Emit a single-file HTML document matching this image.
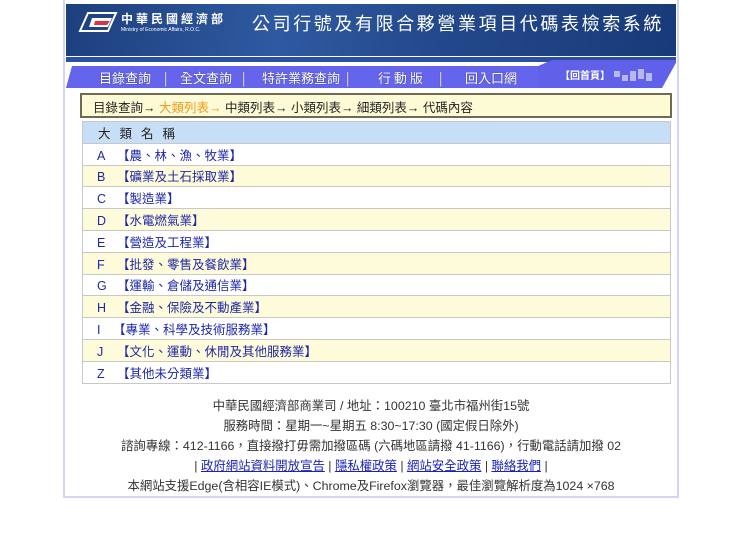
<!DOCTYPE html>
<html><head><meta charset="utf-8">
<style>
*{margin:0;padding:0;box-sizing:border-box}
body{width:740px;height:542px;background:#fff;font-family:"Liberation Sans","Noto Sans CJK TC",sans-serif;position:relative;overflow:hidden}
.outer{position:absolute;left:63px;top:0;width:616px;height:498px;border:2px solid #d4d4f4;border-top:none}
.hdr{position:absolute;left:66px;top:4px;width:610px;height:52px;background:linear-gradient(100deg,#1d3f7e 0%,#2f5aa0 35%,#24498c 60%,#183a78 100%)}
.hdr .t{position:absolute;left:186px;top:6px;color:#fff;font-size:18px;letter-spacing:2.6px;white-space:nowrap;font-family:"Noto Sans CJK TC",sans-serif}
.hdr .m{position:absolute;left:55px;top:6px;color:#fff;font-size:12px;letter-spacing:3px;font-weight:bold;white-space:nowrap;font-family:"Noto Sans CJK TC",sans-serif}
.hdr .e{position:absolute;left:55px;top:23px;color:#fff;font-size:5px;white-space:nowrap}
.stripe{position:absolute;left:66px;top:57px;width:610px;height:5px;background:#2b4fa8}
.nav{position:absolute;left:66px;top:66px;width:490px;height:22px;background:#6464ec;clip-path:polygon(6px 0,100% 0,100% 100%,0 100%)}
.nav2{position:absolute;left:538px;top:60px;width:138px;height:28px;background:#6060e8;clip-path:polygon(14px 0,100% 0,100% 10%,124px 100%,0 100%,0 22%)}
.nav span{position:absolute;top:2px;color:#fff;font-size:13px;white-space:nowrap;font-family:"Noto Sans CJK TC",sans-serif;text-shadow:0 0 1px #335}
.home{position:absolute;left:560px;top:67px;color:#fff;font-size:10px;font-weight:bold;font-family:"Noto Sans CJK TC",sans-serif}
.pix{position:absolute;background:#b8b8e8}
.bc{position:absolute;left:80px;top:93px;width:592px;height:25px;background:#fdfbd6;border:2px solid #6f6a52;font-size:12.5px;padding:2px 0 0 11px;color:#222;white-space:nowrap;font-family:"Liberation Sans","Noto Sans CJK TC",sans-serif}
.bc b{font-weight:normal;color:#f29a1a}
table{position:absolute;left:82px;top:121px;width:589px;border-collapse:collapse;font-size:12.5px;font-family:"Liberation Sans","Noto Sans CJK TC",sans-serif}
td{border:1px solid #c8c8c8;height:21.8px;padding:0 0 0 14px;color:#1d27a8}
tr.h td{background:#c6def6;color:#222;letter-spacing:9px;padding-left:15px}
tr.y td{background:#fdfbd9}
.l{display:inline-block;width:20px}
.ft{position:absolute;left:66px;top:396px;width:610px;text-align:center;font-size:12.4px;line-height:20px;color:#333}
.ft a{color:#1a23b8;text-decoration:underline}
</style></head><body>
<div class="outer"></div>
<div class="hdr">
<svg style="position:absolute;left:12px;top:8px" width="40" height="20" viewBox="0 0 40 20"><path d="M10 1H38L30 19H2Z" fill="none" stroke="#fff" stroke-width="2"/><path d="M14 6H34L30 15H11Z" fill="#fff"/><path d="M17 9H32L29 13H16Z" fill="#e03040"/></svg>
<div class="m">中華民國經濟部</div>
<div class="e">Ministry of Economic Affairs, R.O.C.</div>
<div class="t">公司行號及有限合夥營業項目代碼表檢索系統</div>
</div>
<div class="stripe"></div>
<div class="nav">
<span style="left:33px">目錄查詢</span><span style="left:98px">|</span>
<span style="left:114px">全文查詢</span><span style="left:176px">|</span>
<span style="left:196px">特許業務查詢</span><span style="left:280px">|</span>
<span style="left:312px">行 動 版</span><span style="left:373px">|</span>
<span style="left:399px">回入口網</span>
</div>
<div class="nav2"></div>
<div class="home">【回首頁】</div>
<div class="pix" style="left:614px;top:71px;width:6px;height:6px"></div>
<div class="pix" style="left:622px;top:75px;width:6px;height:6px"></div>
<div class="pix" style="left:630px;top:71px;width:6px;height:10px"></div>
<div class="pix" style="left:638px;top:69px;width:6px;height:10px"></div>
<div class="pix" style="left:646px;top:73px;width:6px;height:8px"></div>
<div class="bc">目錄查詢→ <b>大類列表→</b> 中類列表→ 小類列表→ 細類列表→ 代碼內容</div>
<table>
<tr class="h"><td>大類名稱</td></tr>
<tr><td><span class="l">A</span>【農、林、漁、牧業】</td></tr>
<tr class="y"><td><span class="l">B</span>【礦業及土石採取業】</td></tr>
<tr><td><span class="l">C</span>【製造業】</td></tr>
<tr class="y"><td><span class="l">D</span>【水電燃氣業】</td></tr>
<tr><td><span class="l">E</span>【營造及工程業】</td></tr>
<tr class="y"><td><span class="l">F</span>【批發、零售及餐飲業】</td></tr>
<tr><td><span class="l">G</span>【運輸、倉儲及通信業】</td></tr>
<tr class="y"><td><span class="l">H</span>【金融、保險及不動產業】</td></tr>
<tr><td><span class="l" style="width:16px">I</span>【專業、科學及技術服務業】</td></tr>
<tr class="y"><td><span class="l">J</span>【文化、運動、休閒及其他服務業】</td></tr>
<tr><td><span class="l">Z</span>【其他未分類業】</td></tr>
</table>
<div class="ft">
中華民國經濟部商業司 / 地址：100210 臺北市福州街15號<br>
服務時間：星期一~星期五 8:30~17:30 (國定假日除外)<br>
諮詢專線：412-1166，直接撥打毋需加撥區碼 (六碼地區請撥 41-1166)，行動電話請加撥 02<br>
| <a>政府網站資料開放宣告</a> | <a>隱私權政策</a> | <a>網站安全政策</a> | <a>聯絡我們</a> |<br>
本網站支援Edge(含相容IE模式)、Chrome及Firefox瀏覽器，最佳瀏覽解析度為1024 ×768
</div>
</body></html>
